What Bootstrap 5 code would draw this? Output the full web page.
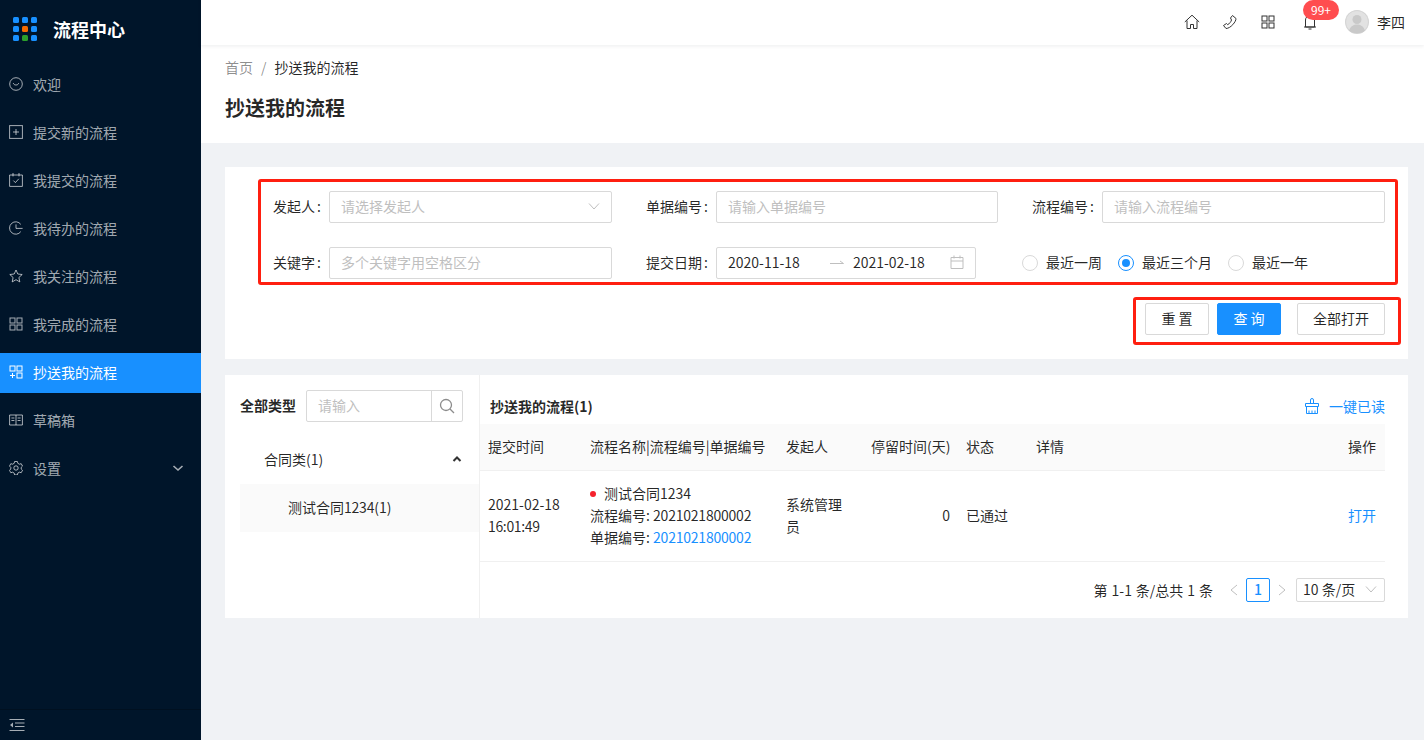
<!DOCTYPE html>
<html lang="zh">
<head>
<meta charset="utf-8">
<title>流程中心</title>
<link href="https://cdn.jsdelivr.net/npm/bootstrap@5.3.0/dist/css/bootstrap.min.css" rel="stylesheet">
<style>
html,body{height:100%;overflow:hidden}
body{font-family:"Noto Sans CJK SC","Liberation Sans",sans-serif;font-size:14px;line-height:22px;color:rgba(0,0,0,.85);background:#f0f2f5}
.shell{height:740px}
.side{width:201px;flex:none;background:#00152a;color:rgba(255,255,255,.65)}
.brand{height:60px;gap:16px;padding-left:13px;padding-bottom:2px;color:#fff;font-size:18px;font-weight:700}
.dots{display:grid;grid-template-columns:repeat(3,6px);gap:3px;width:24px;height:24px}
.dots i{width:6px;height:6px;border-radius:1.5px;background:#1890ff}
.dots i.o{background:#f56a00}.dots i.g{background:#2ca02c}
.menu-wrap{padding-top:5px;gap:8px}
.mitem{height:40px;padding-left:9px;padding-right:16px;padding-bottom:2px;gap:10px}
.mitem svg{width:14px;height:14px;flex:none}
.mitem.on{background:#1890ff;color:#fff}
.collapse-bar{height:31px;border-top:1px solid #001020;padding-left:9px}
.main-area{min-width:0}
.topbar{height:45px;background:#fff;box-shadow:0 1px 4px rgba(0,21,41,.08);padding-right:19px;padding-bottom:2px;position:relative;z-index:2}
.tico{width:16px;height:16px;flex:none}
.tslot{width:38px}
.bell-slot{width:46px;position:relative}
.pill{position:absolute;left:16px;top:-14px;height:20px;width:36px;border-radius:10px;background:#ff4d4f;color:#fff;font-size:12px;line-height:19px;text-align:center}
.avatar{width:24px;height:24px;border-radius:50%;background:#dcdcdc;margin-left:12px;margin-right:8px;overflow:hidden}
.crumbs{height:98px;background:#fff;padding:11px 24px 0}
.crumbs .lnk{color:rgba(0,0,0,.45)}
.crumbs .sep{color:rgba(0,0,0,.45);margin:0 8px}
.ptitle{font-size:20px;font-weight:700;line-height:28px;margin-top:16px;color:rgba(0,0,0,.85)}
.body-area{padding:24px 16px 0 24px;gap:16px}
.panel-w{background:#fff}
.query{height:192px;padding-top:12px}
.redbox{border:3px solid #ff1f10;border-radius:3px}
.filter{margin-left:33px;margin-right:10px;padding:9px 10px 3px 0;display:grid;grid-template-columns:351px 386px 387px;row-gap:24px}
.fcell{display:flex;justify-content:flex-end;align-items:center}
.flabel{margin-right:8px;padding-bottom:2px;white-space:nowrap}
.flabel i{font-style:normal;margin-left:2px}
.fld{width:283px;height:32px;border:1px solid #d9d9d9;border-radius:2px;padding:0 11px 2px;display:flex;align-items:center;justify-content:space-between;color:#bfbfbf;background:#fff}
.fld.mid{width:282px}
.fld.dark{color:rgba(0,0,0,.85)}
.range{width:260px;margin-right:22px;justify-content:flex-start}
.rarrow{margin-left:30px;margin-right:9px;flex:none}
.rcal{margin-left:auto;flex:none}
.radios{width:100%;padding-left:24px;display:flex;align-items:center}
.rad{display:flex;align-items:center;gap:8px;margin-right:16px}
.rad span{padding-bottom:2px}
.rad b{width:16px;height:16px;border-radius:50%;border:1px solid #d9d9d9;display:block;background:#fff}
.rad.sel b{border-color:#1890ff;position:relative}
.rad.sel b::after{content:"";position:absolute;inset:3px;border-radius:50%;background:#1890ff}
.btnbox{width:268px;height:48px;margin-left:auto;margin-right:7px;margin-top:12px;padding:3px 13px 0 9px;gap:8px}
.xbtn{height:32px;width:64px;border:1px solid #d9d9d9;border-radius:2px;background:#fff;color:rgba(0,0,0,.85);padding:0 0 2px;font-size:14px;line-height:28px;--bs-btn-hover-bg:#fff}
.xbtn.pri{background:#1890ff;border-color:#1890ff;color:#fff}
.xbtn.wide{width:88px;margin-left:8px}
.lower{height:243px}
.tree{width:255px;flex:none;border-right:1px solid #f0f0f0;padding:15px 0 0 15px}
.tree-head{height:32px}
.tree-title{font-weight:700;width:66px;flex:none;white-space:nowrap;padding-bottom:2px}
.sgroup{width:157px;height:32px;border:1px solid #d9d9d9;border-radius:2px;display:flex}
.sgroup span{flex:1;padding-left:11px;line-height:28px;color:#bfbfbf}
.sgroup em{width:31px;border-left:1px solid #d9d9d9;display:flex;align-items:center;justify-content:center}
.tnode{height:48px;margin-top:14px;padding:0 17px 2px 24px}
.tsub{height:48px;background:#fafafa;padding:0 0 2px 48px}
.rightp{min-width:0;padding-right:23px}
.rhead{height:49px;padding:20px 0 0 10px;line-height:22px}
.rtitle{font-weight:700}
.blue{color:#1890ff}
.mark-all{gap:10px}
.tb{width:905px;table-layout:fixed;margin:0;--bs-table-bg:transparent;color:rgba(0,0,0,.85)}
.tb th{background:#fafafa;font-weight:400;height:46px;padding:0 8px 2px;vertical-align:middle;border-bottom:1px solid #f0f0f0;white-space:nowrap}
.tb td{height:91px;padding:0 8px 2px;vertical-align:middle;border-bottom:1px solid #f0f0f0;line-height:22px}
.tb .lastc{padding-right:9px}
.w1{width:102px}.w2{width:196px}.w3{width:85px}.w4{width:95px}.w5{width:70px}.w7{width:60px}
.rdot{display:inline-block;width:6px;height:6px;border-radius:50%;background:#f5222d;margin-right:8px;vertical-align:2px}
.num{letter-spacing:-.22px}
.clock{letter-spacing:-.35px}
.pager{height:57px}
.pg-total{margin-right:11px;word-spacing:.8px}
.pg-arrow{width:16px;display:flex;justify-content:center;margin:0 2px}
.pg-cur{width:24px;height:24px;border:1px solid #1890ff;border-radius:2px;color:#1890ff;text-align:center;line-height:20px;font-weight:500;margin:0 2px}
.pg-size{width:89px;height:24px;border:1px solid #d9d9d9;border-radius:2px;padding:0 7px 2px 6px;margin-left:4px;display:flex;align-items:center;justify-content:space-between}
</style>
</head>
<body>
<div class="d-flex shell">
  <aside class="side d-flex flex-column">
    <div class="brand d-flex align-items-center">
      <div class="dots"><i></i><i></i><i></i><i></i><i class="o"></i><i></i><i></i><i class="g"></i><i></i></div>
      <span>流程中心</span>
    </div>
    <nav class="menu-wrap d-flex flex-column flex-grow-1">
      <div class="mitem d-flex align-items-center"><svg viewBox="0 0 14 14" fill="none" stroke="currentColor"><circle cx="7" cy="7" r="6.3"/><path d="M4.3 6.2c.6 2.4 4.8 2.4 5.4 0"/></svg><span>欢迎</span></div>
      <div class="mitem d-flex align-items-center"><svg viewBox="0 0 14 14" fill="none" stroke="currentColor"><rect x=".6" y=".6" width="12.8" height="12.8"/><path d="M7 4v6M4 7h6"/></svg><span>提交新的流程</span></div>
      <div class="mitem d-flex align-items-center"><svg viewBox="0 0 14 14" fill="none" stroke="currentColor"><path d="M.6 2h12.8v11.4H.6zM4 0v3.4M10 0v3.4M4.4 7.6l2 2 3.4-3.8"/></svg><span>我提交的流程</span></div>
      <div class="mitem d-flex align-items-center"><svg viewBox="0 0 14 14" fill="none" stroke="currentColor"><path d="M11.8 10.6A6.2 6.2 0 1 1 11.8 3.400M7 3.400V7.400h6.600"/></svg><span>我待办的流程</span></div>
      <div class="mitem d-flex align-items-center"><svg viewBox="0 0 14 14" fill="none" stroke="currentColor"><path d="M7 1l1.800 4 4.400.5-3.300 3 .9 4.400L7 10.700l-3.800 2.200.9-4.400-3.300-3 4.400-.5z"/></svg><span>我关注的流程</span></div>
      <div class="mitem d-flex align-items-center"><svg viewBox="0 0 14 14" fill="none" stroke="currentColor"><rect x="1" y="1" width="5" height="5"/><rect x="8" y="1" width="5" height="5"/><rect x="1" y="8" width="5" height="5"/><rect x="8" y="8" width="5" height="5"/></svg><span>我完成的流程</span></div>
      <div class="mitem on d-flex align-items-center"><svg viewBox="0 0 14 14" fill="none" stroke="currentColor"><rect x="1" y="1" width="5" height="5"/><rect x="8" y="1" width="5" height="5"/><rect x="8" y="8" width="5" height="5"/><path d="M3.500 8v5M1 10.500h5"/></svg><span>抄送我的流程</span></div>
      <div class="mitem d-flex align-items-center"><svg viewBox="0 0 14 14" fill="none" stroke="currentColor"><path d="M.6 2h12.800v10H.6zM7 2v10M2.400 5h3M2.400 7.500h3M8.600 5h3M8.600 7.500h3"/></svg><span>草稿箱</span></div>
      <div class="mitem d-flex align-items-center"><svg viewBox="0 0 14 14" fill="none" stroke="currentColor"><path d="M5.600.8h2.800l.4 1.800 1.600.9 1.800-.5 1.300 2.400-1.300 1.300v1.600l1.300 1.300-1.300 2.400-1.800-.5-1.600.9-.4 1.800H5.600l-.4-1.800-1.600-.9-1.800.5L.5 9.600l1.300-1.300V6.700L.5 5.400l1.300-2.400 1.800.5 1.600-.9z" transform="translate(0 -.3)"/><circle cx="7" cy="7" r="2.200"/></svg><span class="flex-grow-1">设置</span><svg viewBox="0 0 14 14" fill="none" stroke="currentColor" stroke-width="1.600"><path d="M2.500 5l4.500 4 4.500-4"/></svg></div>
    </nav>
    <div class="collapse-bar d-flex align-items-center"><svg width="16" height="14" viewBox="0 0 16 14" fill="none" stroke="currentColor"><path d="M.5 1.500h15M6 5h9.500M6 8.500h9.500M.5 12.500h15"/><path d="M1 7l3-2.500v5z" fill="currentColor" stroke="none"/></svg></div>
  </aside>
  <div class="main-area flex-grow-1 d-flex flex-column">
    <header class="topbar d-flex align-items-center justify-content-end">
      <div class="tslot d-flex justify-content-center"><svg class="tico" viewBox="0 0 16 16" fill="none" stroke="#333"><path d="M.8 8L8 1.200 15.200 8M3 6.500V14.500h3.500V10.500h3V14.500H13V6.500"/></svg></div>
      <div class="tslot d-flex justify-content-center"><svg class="tico" viewBox="0 0 16 16" fill="none" stroke="#333"><path d="M10.500 1.500l3.500 3c.3 3-5.500 10-10 10l-2.500-3 3-2 1.200 1.200c1.500-.7 3.500-3.200 3.800-4.700L8.500 4z"/></svg></div>
      <div class="tslot d-flex justify-content-center"><svg class="tico" viewBox="0 0 16 16" fill="none" stroke="#333"><rect x="2" y="2" width="5" height="5"/><rect x="9" y="2" width="5" height="5"/><rect x="2" y="9" width="5" height="5"/><rect x="9" y="9" width="5" height="5"/></svg></div>
      <div class="bell-slot d-flex justify-content-center"><svg class="tico" viewBox="0 0 16 16" fill="none" stroke="#333"><path d="M3.500 13V6a4.500 4.500 0 0 1 9 0v7zM2 13h12M6.500 15h3"/></svg><span class="pill">99+</span></div>
      <div class="avatar d-flex align-items-end justify-content-center"><svg width="24" height="24" viewBox="0 0 24 24"><circle cx="12" cy="12" r="11.500" fill="#e2e2e2" stroke="#d4d4d4"/><circle cx="12" cy="9.500" r="4.500" fill="#c9c9c9"/><path d="M4 21c1-5 5-6.500 8-6.500s7 1.500 8 6.500c-4 3-12 3-16 0z" fill="#c9c9c9"/></svg></div>
      <span>李四</span>
    </header>
    <section class="crumbs">
      <div><span class="lnk">首页</span><span class="sep">/</span><span>抄送我的流程</span></div>
      <h1 class="ptitle">抄送我的流程</h1>
    </section>
    <main class="body-area d-flex flex-column">
      <section class="panel-w query">
        <div class="redbox filter">
          <div class="fcell"><span class="flabel">发起人<i>:</i></span><div class="fld"><span>请选择发起人</span><svg width="12" height="12" viewBox="0 0 12 12" fill="none" stroke="#bfbfbf"><path d="M1 3.500l5 5.500 5-5.500"/></svg></div></div>
          <div class="fcell"><span class="flabel">单据编号<i>:</i></span><div class="fld mid"><span>请输入单据编号</span></div></div>
          <div class="fcell"><span class="flabel">流程编号<i>:</i></span><div class="fld"><span>请输入流程编号</span></div></div>
          <div class="fcell"><span class="flabel">关键字<i>:</i></span><div class="fld"><span>多个关键字用空格区分</span></div></div>
          <div class="fcell"><span class="flabel">提交日期<i>:</i></span><div class="fld dark range"><span>2020-11-18</span><svg class="rarrow" width="14" height="8" viewBox="0 0 14 8" fill="none" stroke="#bfbfbf"><path d="M0 5.500h13.500L10 3"/></svg><span>2021-02-18</span><svg class="rcal" width="14" height="14" viewBox="0 0 14 14" fill="none" stroke="#bfbfbf"><path d="M1 2.500h12v11H1zM1 6h12M4 .5v3M10 .5v3"/></svg></div></div>
          <div class="fcell"><div class="radios"><label class="rad"><b></b><span>最近一周</span></label><label class="rad sel"><b></b><span>最近三个月</span></label><label class="rad"><b></b><span>最近一年</span></label></div></div>
        </div>
        <div class="redbox btnbox d-flex">
          <button type="button" class="btn xbtn">重 置</button>
          <button type="button" class="btn xbtn pri">查 询</button>
          <button type="button" class="btn xbtn wide">全部打开</button>
        </div>
      </section>
      <section class="panel-w lower d-flex">
        <div class="tree">
          <div class="tree-head d-flex align-items-center"><span class="tree-title">全部类型</span><div class="sgroup"><span>请输入</span><em><svg width="16" height="16" viewBox="0 0 16 16" fill="none" stroke="#8c8c8c" stroke-width="1.300"><circle cx="7" cy="7" r="5.500"/><path d="M11 11l4 4"/></svg></em></div></div>
          <div class="tnode d-flex align-items-center justify-content-between"><span>合同类(1)</span><svg width="10" height="8" viewBox="0 0 10 8" fill="none" stroke="#333" stroke-width="2"><path d="M1.500 6L5 2.500 8.500 6"/></svg></div>
          <div class="tsub d-flex align-items-center"><span>测试合同<span class="num">1234</span>(1)</span></div>
        </div>
        <div class="rightp flex-grow-1">
          <div class="rhead d-flex justify-content-between align-items-start"><span class="rtitle">抄送我的流程(1)</span><span class="blue mark-all d-flex align-items-center"><svg width="14" height="16" viewBox="0 0 14 16" fill="none" stroke="#1890ff"><path d="M5.500 5.500V2a1.500 1.500 0 0 1 3 0v3.500M.5 5.500h13v3H.5zM1.500 8.500v7h11v-7M4 15.500v-3M7 15.500v-3M10 15.500v-3"/></svg>一键已读</span></div>
          <table class="table tb">
            <colgroup><col class="w1"><col class="w2"><col class="w3"><col class="w4"><col class="w5"><col><col class="w7"></colgroup>
            <thead><tr><th>提交时间</th><th>流程名称|流程编号|单据编号</th><th>发起人</th><th>停留时间(天)</th><th>状态</th><th>详情</th><th class="text-end lastc">操作</th></tr></thead>
            <tbody><tr>
              <td>2021-02-18<br><span class="clock">16:01:49</span></td>
              <td><span class="rdot"></span>测试合同1234<br>流程编号: <span class="num">2021021800002</span><br>单据编号: <span class="blue num">2021021800002</span></td>
              <td>系统管理员</td>
              <td class="text-end">0</td>
              <td>已通过</td>
              <td></td>
              <td class="text-end blue lastc">打开</td>
            </tr></tbody>
          </table>
          <div class="pager d-flex align-items-center justify-content-end">
            <span class="pg-total">第 1-1 条/总共 1 条</span>
            <span class="pg-arrow"><svg width="10" height="12" viewBox="0 0 10 12" fill="none" stroke="#bfbfbf"><path d="M8 1L2 6l6 5"/></svg></span>
            <span class="pg-cur">1</span>
            <span class="pg-arrow"><svg width="10" height="12" viewBox="0 0 10 12" fill="none" stroke="#bfbfbf"><path d="M2 1l6 5-6 5"/></svg></span>
            <div class="pg-size"><span>10 条/页</span><svg width="12" height="12" viewBox="0 0 12 12" fill="none" stroke="#bfbfbf"><path d="M1 3.500l5 5.500 5-5.500"/></svg></div>
          </div>
        </div>
      </section>
    </main>
  </div>
</div>
<script src="https://cdn.jsdelivr.net/npm/bootstrap@5.3.0/dist/js/bootstrap.bundle.min.js"></script>
</body>
</html>
